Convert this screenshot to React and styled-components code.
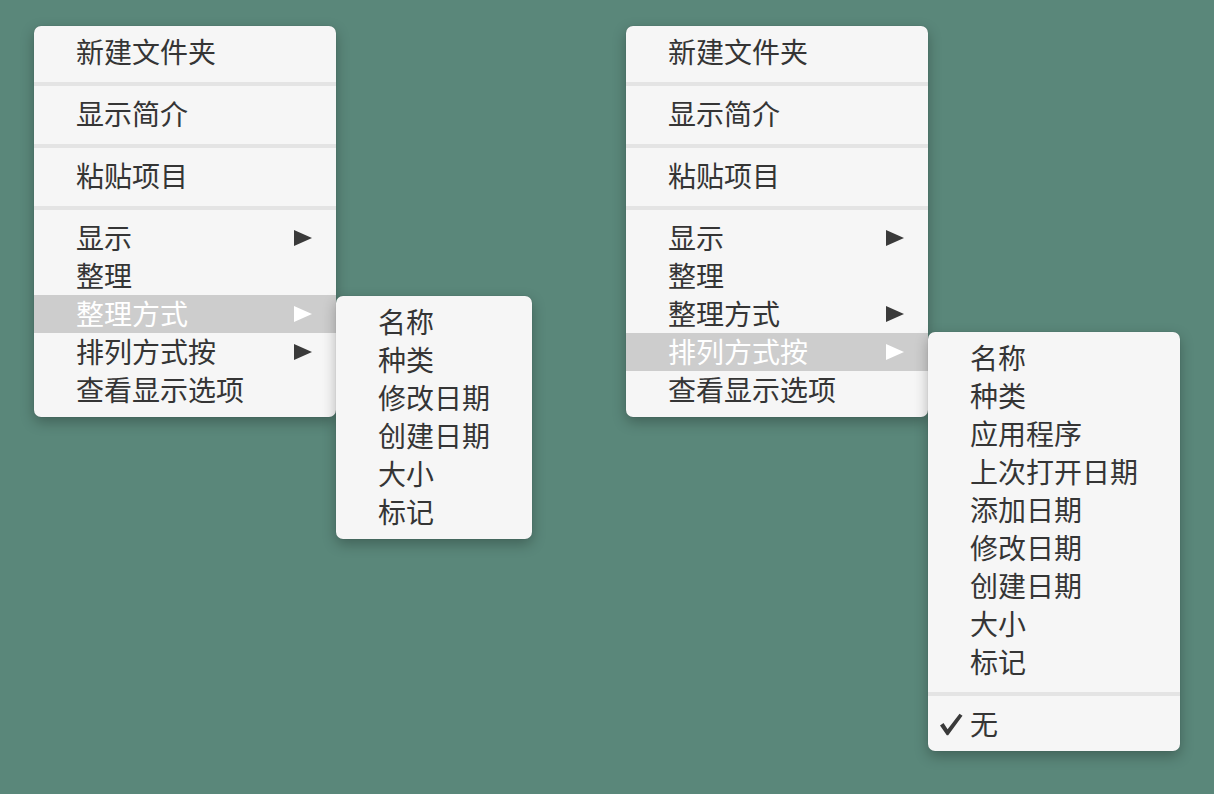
import React from 'react'
import styled, { createGlobalStyle } from 'styled-components'

const GlobalStyle = createGlobalStyle`
  html, body {
    margin: 0;
    padding: 0;
    background: #5a877a;
  }
  body {
    font-family: "Noto Sans CJK SC", "Noto Sans", sans-serif;
  }
`;

const Desktop = styled.div`
  width: 1214px;
  height: 794px;
  box-sizing: border-box;
  padding: 26px 0 0 34px;
  display: flex;
  align-items: flex-start;
  gap: 94px;
  background: #5a877a;
  overflow: hidden;
`;

const Group = styled.div`
  display: flex;
  align-items: flex-start;
`;

const Menu = styled.div`
  width: ${p => p.$width}px;
  margin-top: ${p => p.$offset || 0}px;
  box-sizing: border-box;
  padding: 7px 0 8px;
  background: #f6f6f6;
  border-radius: 7px;
  box-shadow: 0 5px 14px rgba(0, 0, 0, 0.28), 0 0 1px rgba(0, 0, 0, 0.25);
  display: flex;
  flex-direction: column;
`;

const Item = styled.div`
  height: 38px;
  display: flex;
  align-items: center;
  padding: 0 24px 0 0;
  font-size: 28px;
  line-height: 38px;
  color: ${p => (p.$active ? '#ffffff' : '#353535')};
  background: ${p => (p.$active ? '#cdcdcd' : 'transparent')};
  white-space: nowrap;
`;

const Mark = styled.span`
  width: 42px;
  flex: none;
  display: flex;
  justify-content: flex-end;
  padding-right: 7px;
  box-sizing: border-box;
`;

const Label = styled.span`
  flex: 1;
  margin-top: -2px;
`;

const Arrow = styled.span`
  width: 0;
  height: 0;
  border-top: 8px solid transparent;
  border-bottom: 8px solid transparent;
  border-left: 18px solid ${p => (p.$active ? '#ffffff' : '#3a3a3a')};
`;

const Separator = styled.div`
  height: 4px;
  margin: 11px 0 9px;
  background: #e4e4e4;
`;

function Check() {
  return (
    <svg width="24" height="23" viewBox="0 0 24 23">
      <path
        d="M1 12.5 L4.5 10 L8.6 16.2 L20.5 0.8 L23.5 2.8 L9.2 22.2 L7.8 22.2 Z"
        fill="#3a3a3a"
      />
    </svg>
  )
}

function Row({ label, active, arrow, checked }) {
  return (
    <Item $active={active}>
      <Mark>{checked && <Check />}</Mark>
      <Label>{label}</Label>
      {arrow && <Arrow $active={active} />}
    </Item>
  )
}

function MainMenu({ activeIndex }) {
  const lower = [
    { label: '显示', arrow: true },
    { label: '整理' },
    { label: '整理方式', arrow: true },
    { label: '排列方式按', arrow: true },
    { label: '查看显示选项' },
  ]
  return (
    <Menu $width={302}>
      <Row label="新建文件夹" />
      <Separator />
      <Row label="显示简介" />
      <Separator />
      <Row label="粘贴项目" />
      <Separator />
      {lower.map((it, i) => (
        <Row key={it.label} label={it.label} arrow={it.arrow} active={i === activeIndex} />
      ))}
    </Menu>
  )
}

export default function App() {
  const sortItems = ['名称', '种类', '修改日期', '创建日期', '大小', '标记']
  const arrangeItems = ['名称', '种类', '应用程序', '上次打开日期', '添加日期', '修改日期', '创建日期', '大小', '标记']
  return (
    <>
      <GlobalStyle />
      <Desktop>
        <Group>
          <MainMenu activeIndex={2} />
          <Menu $width={196} $offset={270}>
            {sortItems.map(t => <Row key={t} label={t} />)}
          </Menu>
        </Group>
        <Group>
          <MainMenu activeIndex={3} />
          <Menu $width={252} $offset={306}>
            {arrangeItems.map(t => <Row key={t} label={t} />)}
            <Separator />
            <Row label="无" checked />
          </Menu>
        </Group>
      </Desktop>
    </>
  )
}
